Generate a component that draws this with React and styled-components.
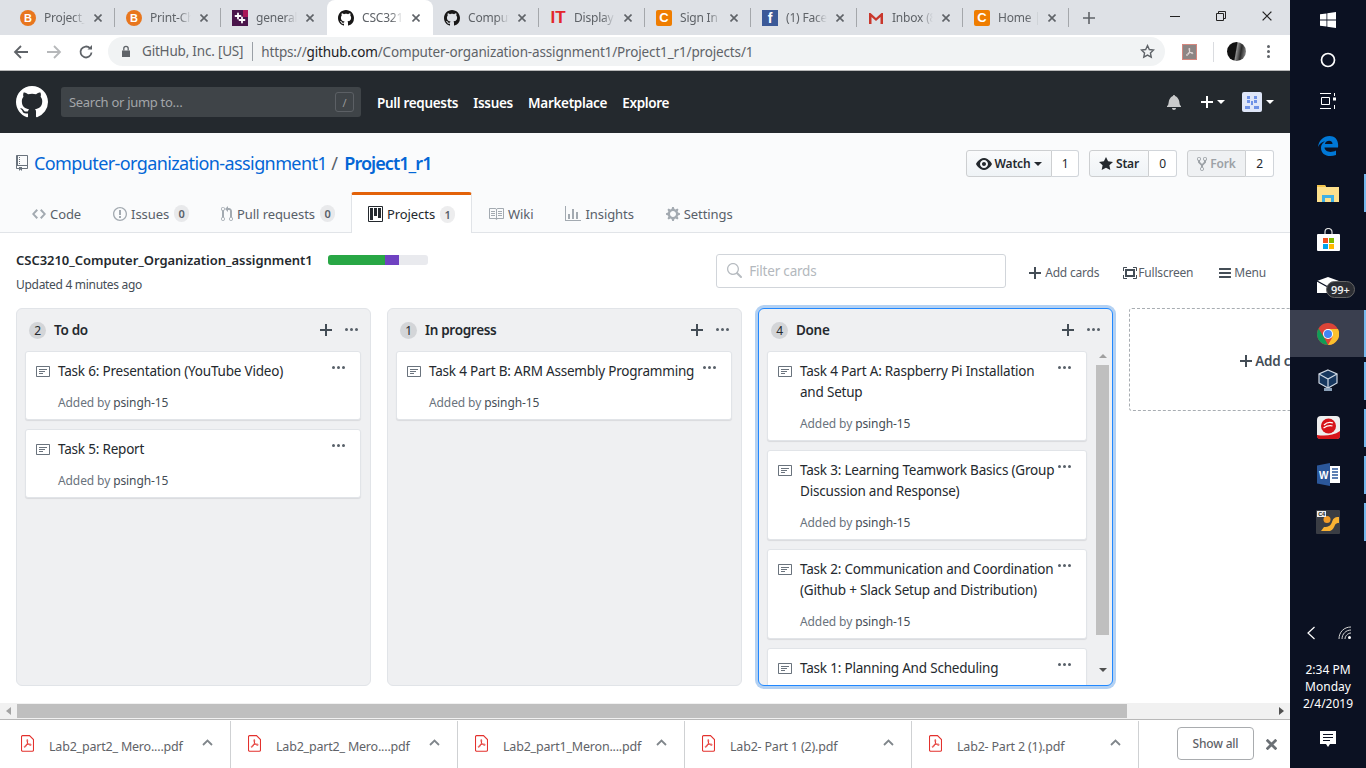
import React from "react";
import styled, { createGlobalStyle } from "styled-components";

const FONT = `"Noto Sans", "Open Sans", Arial, sans-serif`;

const GlobalStyle = createGlobalStyle`
  html, body { margin: 0; padding: 0; background: #fff; }
  * { box-sizing: border-box; }
  body { font-family: ${FONT}; overflow: hidden; }
`;

const Octicon = ({ w = 16, h = 16, vb = "0 0 16 16", d, color = "currentColor" }) => (
  <svg width={w} height={h} viewBox={vb} fill={color} style={{ flex: "none", display: "block" }}>
    <path fillRule="evenodd" d={d} />
  </svg>
);

const ICONS = {
  github: "M8 0C3.58 0 0 3.58 0 8c0 3.54 2.29 6.53 5.47 7.59.4.07.55-.17.55-.38 0-.19-.01-.82-.01-1.49-2.01.37-2.53-.49-2.69-.94-.09-.23-.48-.94-.82-1.13-.28-.15-.68-.52-.01-.53.63-.01 1.08.58 1.23.82.72 1.21 1.87.87 2.33.66.07-.52.28-.87.51-1.07-1.78-.2-3.64-.89-3.64-3.95 0-.87.31-1.59.82-2.15-.08-.2-.36-1.02.08-2.12 0 0 .67-.21 2.2.82.64-.18 1.32-.27 2-.27.68 0 1.36.09 2 .27 1.53-1.04 2.2-.82 2.2-.82.44 1.1.16 1.92.08 2.12.51.56.82 1.27.82 2.15 0 3.07-1.87 3.75-3.65 3.95.29.25.54.73.54 1.48 0 1.07-.01 1.93-.01 2.2 0 .21.15.46.55.38A8.013 8.013 0 0 0 16 8c0-4.42-3.58-8-8-8z",
  project: "M10 12h3V2h-3v10zm-4-2h3V2H6v8zm-4 4h3V2H2v12zm-1 1h13V1H1v14zM14 0H1a1 1 0 0 0-1 1v14a1 1 0 0 0 1 1h13a1 1 0 0 0 1-1V1a1 1 0 0 0-1-1z",
  repo: "M4 9H3V8h1v1zm0-3H3v1h1V6zm0-2H3v1h1V4zm0-2H3v1h1V2zm8-1v12c0 .55-.45 1-1 1H6v2l-1.5-1.5L3 16v-2H1c-.55 0-1-.45-1-1V1c0-.55.45-1 1-1h10c.55 0 1 .45 1 1zm-1 10H1v2h2v-1h3v1h5v-2zm0-10H2v9h9V1z",
  eye: "M8.06 2C3 2 0 8 0 8s3 6 8.06 6C13 14 16 8 16 8s-3-6-7.94-6zM8 12c-2.2 0-4-1.78-4-4 0-2.2 1.8-4 4-4 2.22 0 4 1.8 4 4 0 2.22-1.78 4-4 4zm2-4c0 1.11-.89 2-2 2-1.11 0-2-.89-2-2 0-1.11.89-2 2-2 1.11 0 2 .89 2 2z",
  star: "M14 6l-4.9-.64L7 1 4.9 5.36 0 6l3.6 3.26L2.67 14 7 11.67 11.33 14l-.93-4.74L14 6z",
  fork: "M8 1a1.993 1.993 0 0 0-1 3.72V6L5 8 3 6V4.72A1.993 1.993 0 0 0 2 1a1.993 1.993 0 0 0-1 3.72V6.5l3 3v1.78A1.993 1.993 0 0 0 5 15a1.993 1.993 0 0 0 1-3.72V9.5l3-3V4.72A1.993 1.993 0 0 0 8 1zM2 4.2C1.34 4.2.8 3.65.8 3c0-.65.55-1.2 1.2-1.2.65 0 1.2.55 1.2 1.2 0 .65-.55 1.2-1.2 1.2zm3 10c-.66 0-1.2-.55-1.2-1.2 0-.65.55-1.2 1.2-1.2.65 0 1.2.55 1.2 1.2 0 .65-.55 1.2-1.2 1.2zm3-10c-.66 0-1.2-.55-1.2-1.2 0-.65.55-1.2 1.2-1.2.65 0 1.2.55 1.2 1.2 0 .65-.55 1.2-1.2 1.2z",
  code: "M9.5 3L8 4.5 11.5 8 8 11.5 9.5 13 14 8 9.5 3zm-5 0L0 8l4.5 5L6 11.5 2.5 8 6 4.5 4.5 3z",
  issue: "M7 2.3c3.14 0 5.7 2.56 5.7 5.7s-2.56 5.7-5.7 5.7A5.71 5.71 0 0 1 1.3 8c0-3.14 2.56-5.7 5.7-5.7zM7 1C3.14 1 0 4.14 0 8s3.14 7 7 7 7-3.14 7-7-3.14-7-7-7zm1 3H6v5h2V4zm0 6H6v2h2v-2z",
  pull: "M11 11.28V5c-.03-.78-.34-1.47-.94-2.06C9.46 2.35 8.78 2.03 8 2H7V0L4 3l3 3V4h1c.27.02.48.11.69.31.21.2.3.42.31.69v6.28A1.993 1.993 0 0 0 10 15a1.993 1.993 0 0 0 1-3.72zm-1 2.92c-.66 0-1.2-.55-1.2-1.2 0-.65.55-1.2 1.2-1.2.65 0 1.2.55 1.2 1.2 0 .65-.55 1.2-1.2 1.2zM4 3c0-1.11-.89-2-2-2a1.993 1.993 0 0 0-1 3.72v6.56A1.993 1.993 0 0 0 2 15a1.993 1.993 0 0 0 1-3.72V4.72c.59-.34 1-.98 1-1.72zm-.8 10c0 .66-.55 1.2-1.2 1.2-.65 0-1.2-.55-1.2-1.2 0-.65.55-1.2 1.2-1.2.65 0 1.2.55 1.2 1.2zM2 4.2C1.34 4.2.8 3.65.8 3c0-.65.55-1.2 1.2-1.2.65 0 1.2.55 1.2 1.2 0 .65-.55 1.2-1.2 1.2z",
  book: "M3 5h4v1H3V5zm0 3h4V7H3v1zm0 2h4V9H3v1zm11-5h-4v1h4V5zm0 2h-4v1h4V7zm0 2h-4v1h4V9zm2-6v9c0 .55-.45 1-1 1H9.5l-1 1-1-1H2c-.55 0-1-.45-1-1V3c0-.55.45-1 1-1h5.5l1 1 1-1H15c.55 0 1 .45 1 1zm-8 .5L7.5 3H2v9h6V3.5zm7-.5H9.5l-.5.5V12h6V3z",
  graph: "M16 14v1H0V0h1v14h15zM5 13H3V8h2v5zm4 0H7V3h2v10zm4 0h-2V6h2v7z",
  gear: "M14 8.77v-1.6l-1.94-.64-.45-1.09.88-1.84-1.13-1.13-1.81.91-1.09-.45-.69-1.92h-1.6l-.63 1.94-1.11.45-1.84-.88-1.13 1.13.91 1.81-.45 1.09L0 7.23v1.59l1.94.64.45 1.09-.88 1.84 1.13 1.13 1.81-.91 1.09.45.69 1.92h1.59l.63-1.94 1.11-.45 1.84.88 1.13-1.13-.92-1.81.47-1.09L14 8.75v.02zM7 11c-1.66 0-3-1.34-3-3s1.34-3 3-3 3 1.34 3 3-1.34 3-3 3z",
  bell: "M14 12v1H0v-1l.73-.58c.77-.77.81-2.55 1.19-4.42C2.69 3.23 6 2 6 2c0-.55.45-1 1-1s1 .45 1 1c0 0 3.39 1.23 4.16 5 .38 1.88.42 3.66 1.19 4.42l.66.58H14zm-7 4c1.11 0 2-.89 2-2H5c0 1.11.89 2 2 2z",
  plus: "M12 9H7v5H5V9H0V7h5V2h2v5h5v2z",
  kebab: "M1.5 9a1.5 1.5 0 1 0 0-3 1.5 1.5 0 0 0 0 3zm5 0a1.5 1.5 0 1 0 0-3 1.5 1.5 0 0 0 0 3zM13 7.5a1.5 1.5 0 1 1-3 0 1.5 1.5 0 0 1 3 0z",
  note: "M3 10h4V9H3v1zm0-2h6V7H3v1zm0-2h8V5H3v1zm10 6H1V3h12v9zM1 2c-.55 0-1 .45-1 1v9c0 .55.45 1 1 1h12c.55 0 1-.45 1-1V3c0-.55-.45-1-1-1H1z",
  screen: "M13 10h1v3c0 .547-.453 1-1 1h-3v-1h3v-3zM1 10H0v3c0 .547.453 1 1 1h3v-1H1v-3zm0-7h3V2H1c-.547 0-1 .453-1 1v3h1V3zm1 1h10v8H2V4zm2 6h6V6H4v4zm6-8v1h3v3h1V3c0-.547-.453-1-1-1h-3z",
  bars: "M11.41 9H.59C0 9 0 8.59 0 8c0-.59 0-1 .59-1H11.4c.59 0 .59.41.59 1 0 .59 0 1-.59 1h.01zm0-4H.59C0 5 0 4.59 0 4c0-.59 0-1 .59-1H11.4c.59 0 .59.41.59 1 0 .59 0 1-.59 1h.01zM.59 11H11.4c.59 0 .59.41.59 1 0 .59 0 1-.59 1H.59C0 13 0 12.59 0 12c0-.59 0-1 .59-1z",
  search: "M15.7 13.3l-3.81-3.83A5.93 5.93 0 0 0 13 6c0-3.31-2.69-6-6-6S1 2.69 1 6s2.69 6 6 6c1.3 0 2.48-.41 3.47-1.11l3.83 3.81c.19.2.45.3.7.3.25 0 .52-.09.7-.3a.996.996 0 0 0 0-1.41v.01zM7 10.7c-2.59 0-4.7-2.11-4.7-4.7 0-2.59 2.11-4.7 4.7-4.7 2.59 0 4.7 2.11 4.7 4.7 0 2.59-2.11 4.7-4.7 4.7z",
};

const Page = styled.div`
  width: 1366px;
  height: 768px;
  display: flex;
  overflow: hidden;
  letter-spacing: -0.2px;
`;

const Browser = styled.div`
  width: 1290px;
  height: 768px;
  display: flex;
  flex-direction: column;
  flex: none;
`;

/* chrome tab strip */
const TabStrip = styled.div`
  height: 35px;
  background: #dee1e6;
  display: flex;
  align-items: stretch;
  padding-left: 9px;
  flex: none;
`;

const BrowserTab = styled.div`
  width: 106px;
  flex: none;
  display: flex;
  align-items: center;
  padding-left: 11px;
  position: relative;
  background: ${(p) => (p.$active ? "#fff" : "transparent")};
  border-radius: 8px 8px 0 0;
  &::after {
    content: "";
    position: absolute;
    right: 0;
    top: 8px;
    height: 19px;
    width: 1px;
    background: ${(p) => (p.$active || p.$noSep ? "transparent" : "#a4a7ab")};
  }
`;

const TabTitle = styled.span`
  width: 41px;
  margin-left: 8px;
  font-size: 12px;
  color: #5f6368;
  white-space: nowrap;
  overflow: hidden;
  -webkit-mask-image: linear-gradient(to right, #000 70%, transparent);
  mask-image: linear-gradient(to right, #000 70%, transparent);
`;

const TabClose = styled.span`
  margin-left: 9px;
  display: flex;
  color: #5f6368;
`;

const Favicon = styled.span`
  width: 16px;
  height: 16px;
  flex: none;
  display: flex;
  align-items: center;
  justify-content: center;
  font-family: "Liberation Sans", Arial, sans-serif;
  font-weight: 700;
  color: ${(p) => p.$color || "#fff"};
  font-size: ${(p) => p.$size || 12}px;
  background: ${(p) => p.$bg || "transparent"};
  border-radius: ${(p) => p.$radius || 0}px;
  letter-spacing: 0;
`;

const NewTab = styled.div`
  width: 40px;
  display: flex;
  align-items: center;
  justify-content: center;
  color: #5f6368;
`;

const WindowControls = styled.div`
  margin-left: auto;
  display: flex;
  color: #222;
`;

const WindowButton = styled.div`
  width: 46px;
  height: 31px;
  display: flex;
  align-items: center;
  justify-content: center;
`;

/* address bar */
const Toolbar = styled.div`
  height: 36px;
  flex: none;
  background: #fff;
  border-bottom: 1px solid #b8b8b8;
  display: flex;
  align-items: center;
  padding-bottom: 2px;
`;

const NavButton = styled.div`
  width: 32.5px;
  display: flex;
  justify-content: center;
  color: ${(p) => (p.$off ? "#b6b8ba" : "#5f6368")};
  &:first-child { margin-left: 5px; }
`;

const Omnibox = styled.div`
  width: 1057px;
  height: 29px;
  margin-left: 5.5px;
  background: #f1f3f4;
  border-radius: 15px;
  display: flex;
  align-items: center;
  padding-left: 13px;
  font-size: 13.5px;
  color: #5f6368;
  white-space: nowrap;
  position: relative;
`;

const SiteName = styled.span`
  margin-left: 11px;
  font-size: 13.5px;
  padding-right: 9px;
  border-right: 1px solid #9aa0a6;
  line-height: 19px;
`;

const Url = styled.span`
  margin-left: 8px;
  letter-spacing: -0.15px;
  b { font-weight: 400; color: #202124; }
`;

const OmniStar = styled.span`
  margin-left: auto;
  margin-right: 10px;
  display: flex;
  color: #5f6368;
`;

const ToolExtras = styled.div`
  flex: 1;
  display: flex;
  align-items: center;
  padding-left: 17px;
`;

const PdfExt = styled.div`
  width: 15px;
  height: 16px;
  background: #8c8584;
  border: 1px solid #d5877e;
  display: flex;
  align-items: center;
  justify-content: center;
`;

const ExtSep = styled.div`
  width: 1px;
  height: 20px;
  background: #dadce0;
  margin-left: 16px;
`;

const Avatar = styled.div`
  width: 19px;
  height: 19px;
  margin-left: 13px;
  border-radius: 50%;
  background: linear-gradient(100deg, #111 0 45%, #8d8d8d 50%, #2a2a2a 70%, #a5a5a5);
`;

const Kebab = styled.div`
  margin-left: 21px;
  display: flex;
  flex-direction: column;
  gap: 2px;
  span { width: 3px; height: 3px; border-radius: 50%; background: #5f6368; }
`;

/* github header */
const Header = styled.header`
  height: 62px;
  flex: none;
  background: #24292e;
  display: flex;
  align-items: center;
  padding: 0 16px;
  color: #fff;
`;

const HeaderSearch = styled.div`
  width: 300px;
  height: 30px;
  margin-left: 13px;
  background: #3f4448;
  border-radius: 3px;
  display: flex;
  align-items: center;
  justify-content: space-between;
  padding: 0 7px 0 8px;
  font-size: 13px;
  letter-spacing: -0.3px;
  color: #a3a6a9;
`;

const SlashKey = styled.span`
  width: 19px;
  height: 20px;
  border: 1px solid #5c6065;
  border-radius: 3px;
  font-size: 11px;
  display: flex;
  align-items: center;
  justify-content: center;
  color: #999;
`;

const HeaderNav = styled.nav`
  display: flex;
  gap: 15.2px;
  margin-left: 16px;
  padding-top: 2px;
  font-size: 13.5px;
  font-weight: 600;
  letter-spacing: -0.32px;
`;

const HeaderActions = styled.div`
  margin-left: auto;
  display: flex;
  align-items: center;
`;

const HeaderGap = styled.span`
  width: ${(p) => p.$w}px;
  flex: none;
`;

const Caret = styled.span`
  width: 0;
  height: 0;
  border: 4px solid transparent;
  border-top-color: ${(p) => p.$color || "#fff"};
  border-bottom-width: 0;
  margin-left: ${(p) => p.$gap ?? 4}px;
  flex: none;
`;

const CaretUp = styled(Caret)`
  transform: rotate(180deg);
  margin-top: 3px;
`;

/* repo head */
const RepoHead = styled.section`
  height: 100px;
  flex: none;
  background: #fafbfc;
  border-bottom: 1px solid #e1e4e8;
  display: flex;
  flex-direction: column;
`;

const RepoTop = styled.div`
  height: 60px;
  display: flex;
  align-items: flex-start;
  padding: 17px 16px 0;
`;

const RepoIcon = styled.span`
  color: #6a737d;
  padding-top: 5px;
`;

const RepoTitle = styled.h1`
  margin: 0 0 0 6px;
  font-size: 18px;
  font-weight: 400;
  line-height: 26px;
  letter-spacing: -0.6px;
  color: #586069;
  white-space: nowrap;
  a { color: #0366d6; text-decoration: none; }
  strong { color: #0366d6; font-weight: 600; letter-spacing: -0.95px; margin-left: 3px; }
`;

const RepoActions = styled.div`
  margin-left: auto;
  display: flex;
  gap: 10px;
`;

const ActionGroup = styled.div`
  display: flex;
  height: 27px;
  font-size: 12px;
  font-weight: 600;
  color: #24292e;
`;

const ActionButton = styled.div`
  display: flex;
  align-items: center;
  justify-content: center;
  gap: 3px;
  width: ${(p) => p.$w}px;
  background: ${(p) => (p.$disabled ? "#eff1f3" : "linear-gradient(#fafbfc, #eff3f6)")};
  border: 1px solid #cdcfd1;
  border-radius: 3px 0 0 3px;
  color: ${(p) => (p.$disabled ? "#9ca1a6" : "#24292e")};
`;

const ActionCount = styled.div`
  width: ${(p) => p.$w || 28}px;
  display: flex;
  align-items: center;
  justify-content: center;
  background: #fff;
  border: 1px solid #d1d5da;
  border-left: 0;
  border-radius: 0 3px 3px 0;
  font-weight: 400;
`;

const RepoTabs = styled.nav`
  display: flex;
  align-items: stretch;
  height: 40px;
  padding-left: 16px;
`;

const RepoTab = styled.div`
  display: flex;
  align-items: center;
  gap: 4px;
  padding: ${(p) => (p.$active ? "0 16px" : "3px 16px 0")};
  font-size: 13px;
  letter-spacing: -0.08px;
  color: ${(p) => (p.$active ? "#24292e" : "#586069")};
  white-space: nowrap;
  svg { color: ${(p) => (p.$active ? "#24292e" : "#a3aab1")}; }
  ${(p) =>
    p.$active &&
    `
    background: #fff;
    border: 1px solid #e1e4e8;
    border-top: 3px solid #e36209;
    border-bottom: 0;
    border-radius: 3px 3px 0 0;
    height: 41px;
  `}
`;

const TabCount = styled.span`
  margin-left: 1px;
  min-width: 15px;
  height: 17px;
  padding: 0 4px;
  border-radius: 10px;
  background: rgba(27, 31, 35, 0.08);
  font-size: 11px;
  font-weight: 600;
  color: #586069;
  display: flex;
  align-items: center;
  justify-content: center;
`;

/* project */
const ProjectArea = styled.main`
  flex: none;
  height: 470px;
  background: #fff;
  overflow: hidden;
`;

const ProjectBar = styled.div`
  height: 75px;
  display: flex;
  padding: 0 24px 0 16px;
`;

const ProjectInfo = styled.div`
  padding-top: 17px;
`;

const ProjectName = styled.div`
  display: flex;
  align-items: center;
  font-size: 13px;
  font-weight: 600;
  color: #24292e;
  line-height: 20px;
  white-space: nowrap;
  letter-spacing: -0.03px;
`;

const Progress = styled.div`
  width: 100px;
  height: 10px;
  margin-left: 15px;
  border-radius: 3px;
  background: #e9eaee;
  display: flex;
  overflow: hidden;
`;

const ProgressPart = styled.span`
  display: block;
  background: ${(p) => p.$color};
`;

const Updated = styled.div`
  margin-top: 5px;
  font-size: 12px;
  line-height: 20px;
  letter-spacing: -0.3px;
  color: #444d56;
`;

const ProjectTools = styled.div`
  margin-left: auto;
  display: flex;
  align-items: center;
  height: 34px;
  margin-top: 21px;
  color: #586069;
  font-size: 12px;
`;

const FilterBox = styled.div`
  width: 290px;
  height: 34px;
  margin-right: 23px;
  border: 1px solid #d1d5da;
  border-radius: 3px;
  display: flex;
  align-items: center;
  gap: 7px;
  padding-left: 9px;
  font-size: 13.5px;
  color: #b3b8bd;
`;

const ToolLink = styled.div`
  display: flex;
  align-items: center;
  gap: ${(p) => p.$iconGap ?? 3}px;
  margin-left: ${(p) => p.$gap || 0}px;
  padding-top: 3px;
  svg { color: #444d56; }
`;

const Board = styled.div`
  display: flex;
  gap: 16px;
  padding-left: 16px;
  width: 1290px;
  overflow: hidden;
  padding-top: 3px;
  margin-top: -3px;
  padding-bottom: 4px;
`;

const Column = styled.section`
  width: 355px;
  height: 378px;
  flex: none;
  display: flex;
  flex-direction: column;
  background: #eff0f2;
  border: 1px solid ${(p) => (p.$focus ? "#2188ff" : "#e1e4e8")};
  border-radius: 6px;
  box-shadow: ${(p) => (p.$focus ? "0 0 0 3px rgba(3, 102, 214, 0.3)" : "none")};
  overflow: hidden;
`;

const ColumnHead = styled.div`
  height: 42px;
  flex: none;
  display: flex;
  align-items: center;
  padding: 0 12px 0 12px;
`;

const ColumnCount = styled.span`
  width: 17px;
  height: 17px;
  border-radius: 50%;
  background: #d3d5d8;
  font-size: 12px;
  color: #24292e;
  display: flex;
  align-items: center;
  justify-content: center;
`;

const ColumnName = styled.h3`
  margin: 0 0 0 8px;
  font-size: 13.5px;
  font-weight: 600;
  letter-spacing: -0.3px;
  color: #24292e;
`;

const ColumnActions = styled.div`
  margin-left: auto;
  display: flex;
  align-items: center;
  gap: 13px;
  color: #586069;
  svg:first-child { color: #444d56; }
`;

const ColumnBody = styled.div`
  flex: 1;
  min-height: 0;
  display: flex;
  overflow: hidden;
`;

const CardList = styled.div`
  width: ${(p) => p.$w}px;
  margin-left: 8px;
  display: flex;
  flex-direction: column;
  gap: 9px;
  flex: none;
`;

const Card = styled.article`
  flex: none;
  background: #fff;
  border: 1px solid #e1e4e8;
  border-radius: 3px;
  box-shadow: 0 1px 1px rgba(27, 31, 35, 0.1);
  padding: 9px 15px 7px 10px;
  display: grid;
  grid-template-columns: 22px 1fr 13px;
`;

const CardTitle = styled.div`
  font-size: 13.5px;
  line-height: 21px;
  color: #24292e;
  padding-right: 2px;
`;

const CardMenu = styled.div`
  color: #586069;
  margin-top: -1px;
`;

const CardMeta = styled.div`
  grid-column: 2 / 4;
  margin-top: 11px;
  margin-bottom: -1px;
  font-size: 12px;
  line-height: 20px;
  letter-spacing: -0.1px;
  color: #6a737d;
  span { color: #444d56; }
`;

const NoteSlot = styled.div`
  padding-top: 3px;
  color: #6a737d;
`;

const VScroll = styled.div`
  width: 13px;
  margin-left: 9px;
  display: flex;
  flex-direction: column;
  align-items: center;
  flex: none;
`;

const VThumb = styled.div`
  width: 13px;
  height: 270px;
  background: #bfbfbf;
  margin: 7px 0 33px;
`;

const AddColumn = styled.div`
  width: 314px;
  height: 103px;
  flex: none;
  border: 1px dashed #a8adb2;
  border-radius: 3px;
  display: flex;
  align-items: center;
  justify-content: center;
  gap: 3px;
  font-size: 13.5px;
  font-weight: 600;
  color: #444d56;
  padding-top: 3px;
  margin-right: -200px;
`;

/* page scrollbar */
const HScroll = styled.div`
  height: 16px;
  flex: none;
  display: flex;
  align-items: center;
  background: #f1f1f1;
`;

const ArrowSlot = styled.div`
  width: 17px;
  height: 16px;
  display: flex;
  align-items: center;
  justify-content: center;
  margin-left: ${(p) => (p.$end ? "auto" : "0")};
`;

const HThumb = styled.div`
  width: 1110px;
  height: 14px;
  background: #bfbfbf;
`;

/* downloads */
const Downloads = styled.footer`
  height: 49px;
  flex: none;
  background: #fff;
  border-top: 1px solid #b8b8b8;
  display: flex;
  align-items: center;
`;

const DownloadItem = styled.div`
  width: ${(p) => (p.$first ? 231 : 227)}px;
  height: 47px;
  flex: none;
  display: flex;
  align-items: center;
  padding-left: ${(p) => (p.$first ? 21 : 17)}px;
  border-right: 1px solid #cfd1d3;
  font-size: 12.5px;
  color: #5f6368;
  white-space: nowrap;
`;

const DownloadName = styled.span`
  margin-left: 15px;
  width: 145px;
  padding-top: 5px;
`;

const ChevronSlot = styled.span`
  margin-left: 8px;
  display: flex;
  color: #80868b;
  margin-top: -3px;
`;

const ShowAll = styled.div`
  margin-left: 38px;
  margin-top: -2px;
  width: 77px;
  height: 33px;
  flex: none;
  border: 1px solid #a9acaf;
  border-radius: 4px;
  display: flex;
  align-items: center;
  justify-content: center;
  font-size: 12px;
  font-weight: 500;
  color: #5f6368;
`;

const CloseBar = styled.div`
  margin-left: 12px;
  display: flex;
  color: #6b7075;
`;

/* windows taskbar */
const Taskbar = styled.aside`
  width: 76px;
  height: 768px;
  flex: none;
  background: #0b1122;
  display: flex;
  flex-direction: column;
  color: #fff;
`;

const TaskSlot = styled.div`
  height: ${(p) => p.$h || 47}px;
  flex: none;
  display: flex;
  align-items: center;
  justify-content: center;
  position: relative;
  background: ${(p) => (p.$active ? "#3a3f4f" : "transparent")};
  &::after {
    content: "";
    display: ${(p) => (p.$open ? "block" : "none")};
    position: absolute;
    right: 0;
    top: ${(p) => (p.$active ? 0 : 5)}px;
    bottom: ${(p) => (p.$active ? 0 : 4)}px;
    width: 2px;
    background: #76b9ed;
  }
`;

const MailBadge = styled.span`
  position: absolute;
  left: 36px;
  top: 18px;
  height: 17px;
  padding: 0 4px;
  border-radius: 9px;
  border: 1px solid #666;
  background: #2b2d33;
  font-size: 11px;
  font-weight: 600;
  line-height: 15px;
  color: #eee;
  letter-spacing: 0;
`;

const Tray = styled.div`
  margin-top: auto;
  display: flex;
  flex-direction: column;
  align-items: center;
  padding-bottom: 20px;
`;

const TrayRow = styled.div`
  width: 100%;
  display: flex;
  justify-content: space-between;
  align-items: center;
  padding: 0 14px 0 16px;
`;

const Clock = styled.div`
  margin-top: 21px;
  font-size: 12px;
  line-height: 17px;
  text-align: center;
  color: #fff;
  letter-spacing: 0;
`;

const NoticeSlot = styled.div`
  margin-top: 19px;
`;

const X = ({ s = 8, w = 1.6 }) => (
  <svg width={s} height={s} viewBox="0 0 8 8" stroke="currentColor" strokeWidth={w} fill="none" style={{ display: "block" }}>
    <path d="M0.5 0.5l7 7M7.5 0.5l-7 7" />
  </svg>
);

const Chevron = () => (
  <svg width="11" height="7" viewBox="0 0 11 7" fill="none" stroke="currentColor" strokeWidth="1.8" style={{ display: "block" }}>
    <path d="M1 6l4.5-4.5L10 6" />
  </svg>
);

const PdfIcon = () => (
  <svg width="13" height="17" viewBox="0 0 13 17" fill="none" stroke="#e3312d" strokeWidth="1.1" style={{ flex: "none", display: "block", marginTop: -2 }}>
    <path d="M1.5.6h7l4 4v10.4a1.2 1.2 0 0 1-1.2 1.2H1.7A1.2 1.2 0 0 1 .5 15V1.8A1.2 1.2 0 0 1 1.5.6z" />
    <path d="M6.3 4.5c-.6 0-.4 2.4.6 4 .8 1.3 3 2.4 3.3 1.4.2-1-2.8-1-4.5-.3-1.5.6-3 2.2-2.2 2.7.9.5 2.5-2.7 2.9-4.2.3-1.5.4-3.6-.1-3.6z" strokeWidth=".9" />
  </svg>
);

const Brightspace = () => (
  <Favicon $bg="#e8761e" $radius={8} $size={11}>B</Favicon>
);

const SlackMark = () => (
  <svg width="16" height="16" viewBox="0 0 16 16" style={{ flex: "none" }}>
    <rect width="16" height="16" fill="#4a154b" />
    <path d="M11 0h5v7h-5z" fill="#c2185b" opacity=".8" />
    <g stroke="#fff" strokeWidth="1.8" strokeLinecap="round">
      <path d="M6 3.5v5M3.5 6h5M10 7.5v5M7.5 10h5" />
    </g>
  </svg>
);

const GmailMark = () => (
  <svg width="16" height="16" viewBox="0 0 16 16" style={{ flex: "none" }}>
    <path d="M1 14V3h1.5L8 8l5.500-5H15v11h-2.500V7L8 11 3.500 7v7z" fill="#c9372c" />
  </svg>
);

const GithubFav = () => <Octicon d={ICONS.github} color="#181717" />;

const TABS = [
  { title: "Project_", icon: <Brightspace /> },
  { title: "Print-Ch", icon: <Brightspace /> },
  { title: "general", icon: <SlackMark />, noSep: true },
  { title: "CSC3210", icon: <GithubFav />, active: true },
  { title: "Comput", icon: <GithubFav /> },
  { title: "Display", icon: <Favicon $size={17} $color="#e3262b">IT</Favicon> },
  { title: "Sign In", icon: <Favicon $bg="#ef7d00" $radius={2} $size={13}>C</Favicon> },
  { title: "(1) Face", icon: <Favicon $bg="#3b5998" $size={14}>f</Favicon> },
  { title: "Inbox (8", icon: <GmailMark /> },
  { title: "Home |", icon: <Favicon $bg="#ef7d00" $radius={2} $size={13}>C</Favicon> },
];

const REPO_TABS = [
  { label: "Code", icon: "code", vb: "0 0 14 16", w: 14 },
  { label: "Issues", icon: "issue", vb: "0 0 14 16", w: 14, count: 0 },
  { label: "Pull requests", icon: "pull", vb: "0 0 12 16", w: 12, count: 0 },
  { label: "Projects", icon: "project", vb: "0 0 15 16", w: 15, count: 1, active: true },
  { label: "Wiki", icon: "book", vb: "0 0 16 16", w: 16 },
  { label: "Insights", icon: "graph", vb: "0 0 16 16", w: 16 },
  { label: "Settings", icon: "gear", vb: "0 0 14 16", w: 14 },
];

const COLUMNS = [
  {
    name: "To do",
    cards: ["Task 6: Presentation (YouTube Video)", "Task 5: Report"],
  },
  {
    name: "In progress",
    cards: ["Task 4 Part B: ARM Assembly Programming"],
  },
  {
    name: "Done",
    focus: true,
    total: 4,
    cards: [
      "Task 4 Part A: Raspberry Pi Installation and Setup",
      "Task 3: Learning Teamwork Basics (Group Discussion and Response)",
      "Task 2: Communication and Coordination (Github + Slack Setup and Distribution)",
      "Task 1: Planning And Scheduling",
    ],
  },
];

const DOWNLOADS = [
  "Lab2_part2_ Mero....pdf",
  "Lab2_part2_ Mero....pdf",
  "Lab2_part1_Meron....pdf",
  "Lab2- Part 1 (2).pdf",
  "Lab2- Part 2 (1).pdf",
];

const Dots = () => <Octicon w={13} h={16} vb="0 0 13 16" d={ICONS.kebab} />;

const TaskCard = ({ title }) => (
  <Card>
    <NoteSlot>
      <Octicon w={14} h={16} vb="0 0 14 16" d={ICONS.note} />
    </NoteSlot>
    <CardTitle>{title}</CardTitle>
    <CardMenu>
      <Dots />
    </CardMenu>
    <CardMeta>
      Added by <span>psingh-15</span>
    </CardMeta>
  </Card>
);

const ChromeLogo = () => (
  <svg width="22" height="22" viewBox="0 0 22 22">
    <circle cx="11" cy="11" r="11" fill="#db4437" />
    <path d="M11 22A11 11 0 0 1 1.5 5.5L6.5 13.5 11 22z" fill="#0f9d58" />
    <path d="M11 6h10a11 11 0 0 1-10 16l4.5-8z" fill="#fbc02d" />
    <circle cx="11" cy="11" r="5" fill="#fff" />
    <circle cx="11" cy="11" r="4" fill="#4285f4" />
  </svg>
);

export default function App() {
  return (
    <Page>
      <GlobalStyle />
      <Browser>
        <TabStrip>
          {TABS.map((t) => (
            <BrowserTab key={t.title} $active={t.active} $noSep={t.noSep}>
              {t.icon}
              <TabTitle>{t.title}</TabTitle>
              <TabClose>
                <X />
              </TabClose>
            </BrowserTab>
          ))}
          <NewTab>
            <svg width="12" height="12" viewBox="0 0 12 12" stroke="currentColor" strokeWidth="1.6">
              <path d="M6 0v12M0 6h12" />
            </svg>
          </NewTab>
          <WindowControls>
            <WindowButton>
              <svg width="10" height="10" viewBox="0 0 10 10" stroke="currentColor"><path d="M0 5.5h10" /></svg>
            </WindowButton>
            <WindowButton>
              <svg width="10" height="10" viewBox="0 0 10 10" stroke="currentColor" fill="none"><path d="M.5 2.5h7v7h-7zM2.5 2.5v-2h7v7h-2" /></svg>
            </WindowButton>
            <WindowButton>
              <X s={10} w={1} />
            </WindowButton>
          </WindowControls>
        </TabStrip>

        <Toolbar>
          <NavButton>
            <svg width="16" height="16" viewBox="0 0 16 16" fill="none" stroke="currentColor" strokeWidth="1.8"><path d="M15 8H2M8 2L2 8l6 6" /></svg>
          </NavButton>
          <NavButton $off>
            <svg width="16" height="16" viewBox="0 0 16 16" fill="none" stroke="currentColor" strokeWidth="1.8"><path d="M1 8h13M8 2l6 6-6 6" /></svg>
          </NavButton>
          <NavButton>
            <svg width="16" height="16" viewBox="0 0 16 16" fill="none" stroke="currentColor" strokeWidth="1.8"><path d="M13.5 8.5A5.5 5.5 0 1 1 12 4.2" /><path d="M14 1v4.5H9.5" fill="currentColor" stroke="none" /></svg>
          </NavButton>
          <Omnibox>
            <svg width="10" height="13" viewBox="0 0 10 13" fill="#5f6368"><path d="M1 5.5h8V12H1z" /><path d="M2.8 5.5V3.6a2.2 2.2 0 0 1 4.4 0v1.9" fill="none" stroke="#5f6368" strokeWidth="1.3" /></svg>
            <SiteName>GitHub, Inc. [US]</SiteName>
            <Url>https://<b>github.com</b>/Computer-organization-assignment1/Project1_r1/projects/1</Url>
            <OmniStar>
              <svg width="15" height="15" viewBox="0 0 24 24" fill="none" stroke="currentColor" strokeWidth="2.2"><path d="M12 2.5l2.9 6.3 6.8.8-5 4.7 1.3 6.8-6-3.4-6 3.4 1.3-6.8-5-4.7 6.8-.8z" /></svg>
            </OmniStar>
          </Omnibox>
          <ToolExtras>
            <PdfExt>
              <svg width="11" height="12" viewBox="0 0 13 17" fill="none" stroke="#e8dedd" strokeWidth="1.4"><path d="M6.3 3c-.8 0-.5 3.2.8 5.4 1 1.7 4 3.2 4.4 1.900.3-1.300-3.700-1.300-6-.4-2 .8-4 3-2.900 3.600 1.200.7 3.300-3.600 3.800-5.600.4-2 .5-4.900-.1-4.900z" /></svg>
            </PdfExt>
            <ExtSep />
            <Avatar />
            <Kebab><span /><span /><span /></Kebab>
          </ToolExtras>
        </Toolbar>

        <Header>
          <Octicon w={32} h={32} d={ICONS.github} />
          <HeaderSearch>
            Search or jump to…
            <SlashKey>/</SlashKey>
          </HeaderSearch>
          <HeaderNav>
            <span>Pull requests</span>
            <span>Issues</span>
            <span>Marketplace</span>
            <span>Explore</span>
          </HeaderNav>
          <HeaderActions>
            <Octicon w={14} h={16} vb="0 0 14 16" d={ICONS.bell} color="#c9cacb" />
            <HeaderGap $w={20} />
            <Octicon w={12} h={16} vb="0 0 12 16" d={ICONS.plus} />
            <Caret />
            <HeaderGap $w={17} />
            <svg width="20" height="20" viewBox="0 0 20 20" style={{ display: "block" }}>
              <rect width="20" height="20" rx="2" fill="#dfe6f8" />
              <path d="M3 14h5v3H3zM12 14h5v3h-5zM5 4h3v3H5zM12 4h3v3h-3zM5 8h3v3H5zM12 8h3v3h-3zM9 9h2v4H9z" fill="#6f92e6" />
            </svg>
            <Caret />
          </HeaderActions>
        </Header>

        <RepoHead>
          <RepoTop>
            <RepoIcon>
              <Octicon w={12} h={16} vb="0 0 12 16" d={ICONS.repo} />
            </RepoIcon>
            <RepoTitle>
              <a>Computer-organization-assignment1</a> / <strong>Project1_r1</strong>
            </RepoTitle>
            <RepoActions>
              <ActionGroup>
                <ActionButton $w={86}>
                  <Octicon w={16} h={16} d={ICONS.eye} />
                  Watch
                  <Caret $color="#24292e" $gap={1} />
                </ActionButton>
                <ActionCount $w={27}>1</ActionCount>
              </ActionGroup>
              <ActionGroup>
                <ActionButton $w={60}>
                  <Octicon w={14} h={16} vb="0 0 14 16" d={ICONS.star} />
                  Star
                </ActionButton>
                <ActionCount>0</ActionCount>
              </ActionGroup>
              <ActionGroup>
                <ActionButton $w={59} $disabled>
                  <Octicon w={10} h={16} vb="0 0 10 16" d={ICONS.fork} />
                  Fork
                </ActionButton>
                <ActionCount>2</ActionCount>
              </ActionGroup>
            </RepoActions>
          </RepoTop>
          <RepoTabs>
            {REPO_TABS.map((t) => (
              <RepoTab key={t.label} $active={t.active}>
                <Octicon w={t.w} h={16} vb={t.vb} d={ICONS[t.icon]} />
                {t.label}
                {t.count !== undefined && <TabCount>{t.count}</TabCount>}
              </RepoTab>
            ))}
          </RepoTabs>
        </RepoHead>

        <ProjectArea>
          <ProjectBar>
            <ProjectInfo>
              <ProjectName>
                CSC3210_Computer_Organization_assignment1
                <Progress>
                  <ProgressPart $color="#28a745" style={{ width: "57%" }} />
                  <ProgressPart $color="#6f42c1" style={{ width: "14%" }} />
                </Progress>
              </ProjectName>
              <Updated>Updated 4 minutes ago</Updated>
            </ProjectInfo>
            <ProjectTools>
              <FilterBox>
                <Octicon w={16} h={16} d={ICONS.search} color="#b7bcc1" />
                Filter cards
              </FilterBox>
              <ToolLink $iconGap={4}>
                <Octicon w={12} h={16} vb="0 0 12 16" d={ICONS.plus} />
                Add cards
              </ToolLink>
              <ToolLink $gap={24} $iconGap={1}>
                <Octicon w={14} h={16} vb="0 0 14 16" d={ICONS.screen} />
                Fullscreen
              </ToolLink>
              <ToolLink $gap={26}>
                <Octicon w={12} h={16} vb="0 0 12 16" d={ICONS.bars} />
                Menu
              </ToolLink>
            </ProjectTools>
          </ProjectBar>

          <Board>
            {COLUMNS.map((c) => (
              <Column key={c.name} $focus={c.focus}>
                <ColumnHead>
                  <ColumnCount>{c.total || c.cards.length}</ColumnCount>
                  <ColumnName>{c.name}</ColumnName>
                  <ColumnActions>
                    <Octicon w={12} h={16} vb="0 0 12 16" d={ICONS.plus} />
                    <Dots />
                  </ColumnActions>
                </ColumnHead>
                <ColumnBody>
                  <CardList $w={c.focus ? 320 : 336}>
                    {c.cards.map((title) => (
                      <TaskCard key={title} title={title} />
                    ))}
                  </CardList>
                  {c.focus && (
                    <VScroll>
                      <CaretUp $color="#a0a0a0" $gap={0} />
                      <VThumb />
                      <Caret $color="#505050" $gap={0} />
                    </VScroll>
                  )}
                </ColumnBody>
              </Column>
            ))}
            <AddColumn>
              <Octicon w={12} h={16} vb="0 0 12 16" d={ICONS.plus} />
              Add column
            </AddColumn>
          </Board>
        </ProjectArea>

        <HScroll>
          <ArrowSlot>
            <svg width="5" height="8" viewBox="0 0 5 8" fill="#a3a3a3"><path d="M5 0v8L0 4z" /></svg>
          </ArrowSlot>
          <HThumb />
          <ArrowSlot $end>
            <svg width="5" height="8" viewBox="0 0 5 8" fill="#505050"><path d="M0 0v8l5-4z" /></svg>
          </ArrowSlot>
        </HScroll>

        <Downloads>
          {DOWNLOADS.map((name, i) => (
            <DownloadItem key={i} $first={i === 0}>
              <PdfIcon />
              <DownloadName>{name}</DownloadName>
              <ChevronSlot>
                <Chevron />
              </ChevronSlot>
            </DownloadItem>
          ))}
          <ShowAll>Show all</ShowAll>
          <CloseBar>
            <X s={11} w={2} />
          </CloseBar>
        </Downloads>
      </Browser>

      <Taskbar>
        <TaskSlot $h={40}>
          <svg width="16" height="16" viewBox="0 0 16 16" fill="#fff"><path d="M0 2.3l6.5-.9v6.2H0zM7.3 1.3L16 0v7.6H7.3zM0 8.4h6.5v6.2L0 13.7zM7.3 8.4H16V16l-8.7-1.3z" /></svg>
        </TaskSlot>
        <TaskSlot $h={40}>
          <svg width="16" height="16" viewBox="0 0 16 16" fill="none" stroke="#fff" strokeWidth="1.7"><circle cx="8" cy="8" r="6.5" /></svg>
        </TaskSlot>
        <TaskSlot $h={42}>
          <svg width="16" height="16" viewBox="0 0 16 16" fill="none" stroke="#fff"><path d="M0 .5h11M0 15.5h11M1.5 4.5h8v7h-8zM14.5 0v3M14.5 12v4" /><rect x="13" y="4.5" width="3" height="3" fill="#fff" stroke="none" /></svg>
        </TaskSlot>
        <TaskSlot>
          <svg width="22" height="22" viewBox="0 0 22 22">
            <path d="M21 12.5H7.5c.2 3.8 5.8 6 11.5 3v4.5c-8 3-15-.5-15-7C4 9 7 6.5 9 6 5 6.5 2.5 9 1 12 2 5 6.5 1 12.5 1 18 1 22 5 21 12.5zM15.5 9c.3-4-6.5-4.5-7.6 0z" fill="#0078d7" />
          </svg>
        </TaskSlot>
        <TaskSlot $open>
          <svg width="22" height="18" viewBox="0 0 22 18">
            <path d="M0 1h8l1 2h13v15H0z" fill="#fde08c" />
            <path d="M0 1h8l1 2H0z" fill="#f3c54c" />
            <path d="M5 18v-7h12v7h-3v-4H8v4z" fill="#3eb0e6" />
          </svg>
        </TaskSlot>
        <TaskSlot>
          <svg width="23" height="23" viewBox="0 0 23 23">
            <path d="M8 6V4a3.5 3.5 0 0 1 7 0v2" fill="none" stroke="#ddd" strokeWidth="1.2" />
            <rect y="6" width="23" height="17" rx="1" fill="#fff" />
            <path d="M6 10h5v5H6z" fill="#f25022" /><path d="M12 10h5v5h-5z" fill="#7fba00" />
            <path d="M6 16h5v5H6z" fill="#00a4ef" /><path d="M12 16h5v5h-5z" fill="#ffb900" />
          </svg>
        </TaskSlot>
        <TaskSlot>
          <svg width="24" height="20" viewBox="0 0 24 20"><path d="M1 4l11-4 11 4v12H1z" fill="#fff" /><path d="M1 4l11 6 11-6" fill="none" stroke="#0b1122" strokeWidth="1.2" /></svg>
          <MailBadge>99+</MailBadge>
        </TaskSlot>
        <TaskSlot $active $open>
          <ChromeLogo />
        </TaskSlot>
        <TaskSlot $open>
          <svg width="20" height="23" viewBox="0 0 20 23">
            <path d="M10 1l9 4v9l-9 5-9-5V5z" fill="#17375e" stroke="#cfd8e3" strokeWidth="1.2" />
            <path d="M1 5l9 5 9-5M10 10v9" fill="none" stroke="#cfd8e3" strokeWidth="1.2" />
            <path d="M6 19h8v3H6z" fill="#8aa0b8" />
          </svg>
        </TaskSlot>
        <TaskSlot $open>
          <svg width="23" height="23" viewBox="0 0 23 23">
            <rect width="23" height="23" rx="4" fill="#eee" />
            <path d="M0 19c7 1 16 1 23-4v5a3 3 0 0 1-3 3H3a3 3 0 0 1-3-3z" fill="#d7141a" />
            <circle cx="11.5" cy="10" r="7.5" fill="#d7141a" />
            <path d="M7 9c3-3 6-3 9-2M6.5 12c3-2 6-3 9-2" stroke="#fff" strokeWidth="1.3" fill="none" />
          </svg>
        </TaskSlot>
        <TaskSlot $open>
          <svg width="23" height="23" viewBox="0 0 23 23" style={{ display: "block" }}>
            <path d="M13 3h10v17H13z" fill="#fff" />
            <path d="M15 6h6M15 9h6M15 12h6M15 15h6" stroke="#2b579a" strokeWidth="1.3" />
            <path d="M0 2.5L13 0v23L0 20.5z" fill="#2b579a" />
            <text x="6.5" y="15.5" textAnchor="middle" fontSize="10" fontWeight="700" fill="#fff" fontFamily="Liberation Sans">W</text>
          </svg>
        </TaskSlot>
        <TaskSlot $open>
          <svg width="24" height="24" viewBox="0 0 24 24" style={{ display: "block" }}>
            <rect width="24" height="24" rx="1" fill="#3a3d44" />
            <circle cx="11" cy="9.5" r="3.5" fill="#f29b27" />
            <path d="M23 7c-5 0-6 2-7 5s-3 5-8 5l-3 4h9c3-1 4-4 5-6 .8-1.600 2-2 4-2z" fill="#f9b233" />
            <rect x="1" y="1" width="9" height="6" fill="#eee" />
            <text x="5.5" y="6" textAnchor="middle" fontSize="5.5" fontWeight="700" fill="#222" fontFamily="Liberation Sans">C4</text>
          </svg>
        </TaskSlot>

        <Tray>
          <TrayRow>
            <svg width="10" height="14" viewBox="0 0 10 14" fill="none" stroke="#fff" strokeWidth="1.2"><path d="M8.5 1L2 7l6.5 6" /></svg>
            <svg width="14" height="14" viewBox="0 0 14 14" fill="none" stroke="#d5d5d5"><path d="M1 13C1 6 6 1 13 1M4 13c0-5 4-9 9-9M7 13c0-3 3-6 6-6" /><circle cx="11.5" cy="11.5" r="1.5" fill="#fff" stroke="none" /></svg>
          </TrayRow>
          <Clock>
            2:34 PM
            <br />
            Monday
            <br />
            2/4/2019
          </Clock>
          <NoticeSlot>
            <svg width="16" height="17" viewBox="0 0 16 17" style={{ display: "block" }}>
              <path d="M0 0h16v13h-6l-2 3-2-3H0z" fill="#fff" />
              <path d="M3 3.5h10M3 6.5h10M3 9.5h7" stroke="#0b1122" />
            </svg>
          </NoticeSlot>
        </Tray>
      </Taskbar>
    </Page>
  );
}
